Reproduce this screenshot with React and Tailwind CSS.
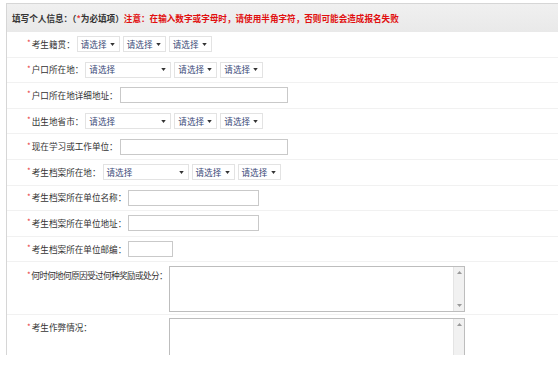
import React from "react";

const font = { fontFamily: '"Noto Sans CJK SC", "Noto Sans", sans-serif' };

const Star = () => (
  <span className="mr-[1px] text-[8px] leading-none text-[#e8393b] relative -top-[1px]">*</span>
);

const Select = ({ wide }) => (
  <div
    className={`flex h-[16px] items-center justify-between border border-[#e3e3e3] bg-white pl-[3px] pr-[4px] text-[#3b4a78] ${
      wide ? "w-[86px]" : "w-[43px]"
    }`}
  >
    <span>请选择</span>
    <svg width="5" height="3" viewBox="0 0 6 4">
      <path d="M0 0h6L3 4z" fill="#333" />
    </svg>
  </div>
);

const Selects = ({ wide }) => (
  <div className="flex gap-[3px]">
    <Select wide={wide} />
    <Select />
    <Select />
  </div>
);

const TextBox = ({ w }) => (
  <input
    type="text"
    className={`h-[16px] border border-[#c9c9c9] bg-white outline-none ${w}`}
  />
);

const Row = ({ label, children }) => (
  <div className="flex h-[25.6px] items-center border-b border-[#f1f1f1] pl-[20px]">
    <Star />
    <span className="mr-[2px] text-[#333]">{label}</span>
    {children}
  </div>
);

const Area = () => (
  <div className="flex h-[46px] w-[296px] border border-[#bdbdbd] bg-white">
    <textarea className="h-full flex-1 resize-none outline-none" />
    <div className="flex w-[11px] flex-col items-center justify-between border-l border-[#e4e4e4] bg-[#f1f1f1] py-[4px]">
      <svg width="5" height="3" viewBox="0 0 5 3">
        <path d="M0 3h5L2.5 0z" fill="#9a9a9a" />
      </svg>
      <svg width="5" height="3" viewBox="0 0 5 3">
        <path d="M0 0h5L2.5 3z" fill="#9a9a9a" />
      </svg>
    </div>
  </div>
);

export default function App() {
  return (
    <div className="h-[383px] w-[558px] overflow-hidden bg-white pl-[6px] pt-[3px] text-[8.6px]" style={font}>
      <div className="h-[352px] overflow-hidden border-l border-t border-[#d6d6d6]">
        <div className="flex h-[28px] items-center whitespace-nowrap bg-gradient-to-b from-[#f0f0f0] to-[#e9e9e9] pl-[5px] font-bold">
          <span className="text-[#333]">
            填写个人信息：（<span className="text-[#e8393b]">*</span>为必填项）
          </span>
          <span className="text-[#e10f0f]">注意：在输入数字或字母时，请使用半角字符，否则可能会造成报名失败</span>
        </div>

        <Row label="考生籍贯：">
          <Selects />
        </Row>
        <Row label="户口所在地：">
          <Selects wide />
        </Row>
        <Row label="户口所在地详细地址：">
          <TextBox w="w-[168px]" />
        </Row>
        <Row label="出生地省市：">
          <Selects wide />
        </Row>
        <Row label="现在学习或工作单位：">
          <TextBox w="w-[168px]" />
        </Row>
        <Row label="考生档案所在地：">
          <Selects wide />
        </Row>
        <Row label="考生档案所在单位名称：">
          <TextBox w="w-[131px]" />
        </Row>
        <Row label="考生档案所在单位地址：">
          <TextBox w="w-[131px]" />
        </Row>
        <Row label="考生档案所在单位邮编：">
          <TextBox w="w-[45px]" />
        </Row>

        <div className="flex h-[53px] items-start border-b border-[#f1f1f1] pl-[20px] pt-[4px]">
          <div className="flex w-[142px] shrink-0 items-center whitespace-nowrap pt-[3px] tracking-[-0.6px]">
            <Star />
            <span className="text-[#333]">何时何地何原因受过何种奖励或处分：</span>
          </div>
          <Area />
        </div>
        <div className="flex h-[60px] items-start pl-[20px] pt-[3px]">
          <div className="flex w-[142px] shrink-0 items-center whitespace-nowrap pt-[3px]">
            <Star />
            <span className="text-[#333]">考生作弊情况：</span>
          </div>
          <Area />
        </div>
      </div>
    </div>
  );
}
